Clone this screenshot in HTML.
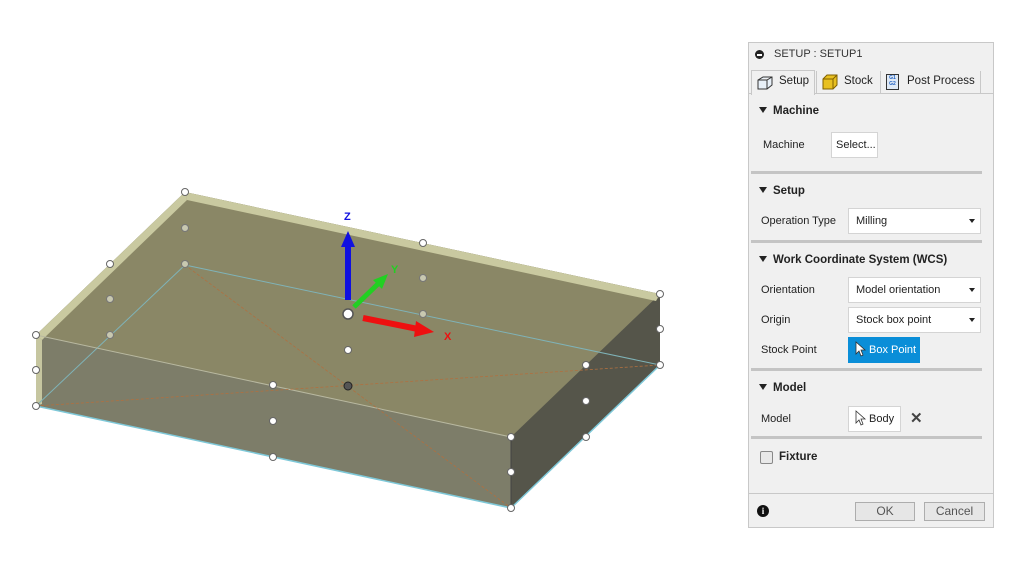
<!DOCTYPE html>
<html><head><meta charset="utf-8"><style>
body{margin:0;width:1035px;height:570px;background:#fff;font-family:"Liberation Sans",sans-serif;position:relative;overflow:hidden}
.p{position:absolute;left:748px;top:42px;width:246px;height:486px;background:#f0f0f0;border:1px solid #c8c8c8;box-sizing:border-box;font-size:11px;color:#222}
.a{position:absolute}
.sep{position:absolute;left:2px;width:231px;height:3px;background:#c4c4c4}
.h{position:absolute;left:10px;font-weight:bold;font-size:11.5px}
.h:before{content:"";display:inline-block;border-left:4px solid transparent;border-right:4px solid transparent;border-top:6px solid #222;margin-right:6px;vertical-align:1px}
.box{position:absolute;background:#fff;border:1px solid #d4d4d4;box-sizing:border-box;padding-left:7px;line-height:24px}
.dd:after{content:"";position:absolute;right:5px;top:10px;border-left:3px solid transparent;border-right:3px solid transparent;border-top:4px solid #222}
.btn{position:absolute;background:#e6e6e6;border:1px solid #adadad;box-sizing:border-box;text-align:center;line-height:17px;font-size:12px;color:#555}
</style></head><body>
<svg class="a" style="left:0;top:0" width="740" height="570">
<polygon points="185,192 660,294 660,365 511,508 36,406 36,335" fill="#7f7d66"/>
<polygon points="185,192 660,294 511,437 36,335" fill="#8a8766"/>
<polygon points="36,335 511,437 511,508 36,406" fill="#7d7d69"/>
<polygon points="511,437 660,294 660,365 511,508" fill="#55554a"/>
<polygon points="185,192 660,294 656,301 187,200" fill="#c9c9a0"/>
<polygon points="185,192 187,200 42,340 36,335" fill="#c9c9a0"/>
<polygon points="36,335 42,340 42,404 36,406" fill="#c6c6a0"/>
<line x1="185" y1="265" x2="660" y2="365" stroke="#7fb3b8" stroke-width="1"/>
<line x1="185" y1="265" x2="36" y2="406" stroke="#7fb3b8"/>
<line x1="36" y1="406" x2="511" y2="508" stroke="#7ec8d8" stroke-width="1.5"/>
<line x1="511" y1="508" x2="660" y2="365" stroke="#7ec8d8" stroke-width="1.5"/>
<line x1="36" y1="335" x2="511" y2="437" stroke="#b8b8a0"/>
<line x1="511" y1="437" x2="511" y2="508" stroke="#444"/>
<line x1="185" y1="265" x2="511" y2="508" stroke="#b07040" stroke-dasharray="3,2" stroke-width=".8"/>
<line x1="36" y1="406" x2="660" y2="365" stroke="#b07040" stroke-dasharray="3,2" stroke-width=".8"/>
<g fill="#fff" stroke="#666" stroke-width="1">
<circle cx="185" cy="192" r="3.5"/><circle cx="423" cy="243" r="3.5"/><circle cx="660" cy="294" r="3.5"/>
<circle cx="110" cy="264" r="3.5"/><circle cx="36" cy="335" r="3.5"/><circle cx="36" cy="370" r="3.5"/><circle cx="36" cy="406" r="3.5"/>
<circle cx="660" cy="329" r="3.5"/><circle cx="660" cy="365" r="3.5"/><circle cx="586" cy="365" r="3.5"/><circle cx="586" cy="401" r="3.5"/><circle cx="586" cy="437" r="3.5"/>
<circle cx="511" cy="437" r="3.5"/><circle cx="511" cy="472" r="3.5"/><circle cx="511" cy="508" r="3.5"/>
<circle cx="273" cy="385" r="3.5"/><circle cx="273" cy="421" r="3.5"/><circle cx="348" cy="350" r="3.5"/><circle cx="273" cy="457" r="3.5"/>
</g>
<g fill="#c8c8b0" stroke="#777"><circle cx="185" cy="228" r="3.5"/><circle cx="185" cy="264" r="3.5"/><circle cx="110" cy="299" r="3.5"/><circle cx="110" cy="335" r="3.5"/><circle cx="423" cy="278" r="3.5"/><circle cx="423" cy="314" r="3.5"/></g>
<circle cx="348" cy="386" r="4" fill="#555" stroke="#222"/>
<rect x="345" y="245" width="6" height="55" fill="#1010e0"/><polygon points="341,247 355,247 348,231" fill="#1010e0"/>
<line x1="354" y1="307" x2="380" y2="282" stroke="#22d022" stroke-width="5"/><polygon points="373,280 388,274 382,289" fill="#22d022"/>
<line x1="363" y1="318" x2="418" y2="329" stroke="#ee1010" stroke-width="6"/><polygon points="416,321 434,332 414,337" fill="#ee1010"/>
<circle cx="348" cy="314" r="5" fill="#fff" stroke="#555" stroke-width="1.5"/>
<text x="344" y="220" fill="#1010e0" font-size="11" font-weight="bold" font-family="Liberation Sans">Z</text>
<text x="391" y="273" fill="#22d022" font-size="11" font-weight="bold" font-family="Liberation Sans">Y</text>
<text x="444" y="340" fill="#ee1010" font-size="11" font-weight="bold" font-family="Liberation Sans">X</text>
</svg>
<div class="p">
<div class="a" style="left:6px;top:7px;width:9px;height:9px;border-radius:50%;background:#222"></div>
<div class="a" style="left:8px;top:11px;width:5px;height:1.5px;background:#fff"></div>
<div class="a" style="left:25px;top:5px;color:#333">SETUP : SETUP1</div>
<div class="a" style="left:0;top:50px;width:244px;height:1px;background:#c8c8c8"></div>
<div class="a" style="left:2px;top:27px;width:64px;height:25px;background:#f0f0f0;border:1px solid #c8c8c8;border-bottom:none;box-sizing:border-box"></div>
<svg class="a" style="left:8px;top:31px" width="16" height="16"><path d="M1 6 L6 3 L15 3 L15 11 L10 15 L1 15 Z M1 6 L10 6 L15 3 M10 6 L10 15" fill="#e8f0f8" stroke="#333"/></svg>
<div class="a" style="left:30px;top:32px;font-size:11.5px">Setup</div>
<div class="a" style="left:67px;top:28px;width:1px;height:22px;background:#c8c8c8"></div>
<svg class="a" style="left:73px;top:31px" width="16" height="16"><path d="M1 5 L5 1 L15 1 L15 11 L11 15 L1 15 Z" fill="#e8c020" stroke="#806000"/><path d="M1 5 L11 5 L15 1 M11 5 L11 15" stroke="#806000" fill="none"/></svg>
<div class="a" style="left:95px;top:32px;font-size:11.5px">Stock</div>
<div class="a" style="left:131px;top:28px;width:1px;height:22px;background:#c8c8c8"></div>
<div class="a" style="left:137px;top:31px;width:13px;height:16px;background:#dfe9f5;border:1px solid #333;box-sizing:border-box;font-size:5px;color:#2060c0;line-height:6px;text-align:center;font-weight:bold">G1<br>G2</div>
<div class="a" style="left:158px;top:32px;font-size:11.5px">Post Process</div>
<div class="a" style="left:231px;top:28px;width:1px;height:22px;background:#c8c8c8"></div>
<div class="h" style="top:62px">Machine</div>
<div class="a" style="left:14px;top:96px">Machine</div>
<div class="box" style="left:82px;top:89px;width:47px;height:26px;padding-left:4px">Select...</div>
<div class="sep" style="top:128px"></div>
<div class="h" style="top:142px">Setup</div>
<div class="a" style="left:12px;top:172px">Operation Type</div>
<div class="box dd" style="left:99px;top:165px;width:133px;height:26px">Milling</div>
<div class="sep" style="top:197px"></div>
<div class="h" style="top:211px">Work Coordinate System (WCS)</div>
<div class="a" style="left:12px;top:241px">Orientation</div>
<div class="box dd" style="left:99px;top:234px;width:133px;height:26px">Model orientation</div>
<div class="a" style="left:12px;top:271px">Origin</div>
<div class="box dd" style="left:99px;top:264px;width:133px;height:26px">Stock box point</div>
<div class="a" style="left:12px;top:301px">Stock Point</div>
<div class="a" style="left:99px;top:294px;width:72px;height:26px;background:#0a8ed8;color:#fff;line-height:26px;padding-left:21px;box-sizing:border-box">Box Point</div>
<svg class="a" style="left:106px;top:298px" width="12" height="16"><path d="M1 1 L1 13 L4 10 L6 15 L8 14 L6 9 L10 9 Z" fill="#fff" stroke="#333" stroke-width=".8"/></svg>
<div class="sep" style="top:325px"></div>
<div class="h" style="top:339px">Model</div>
<div class="a" style="left:12px;top:370px">Model</div>
<div class="box" style="left:99px;top:363px;width:53px;height:26px;padding-left:20px">Body</div>
<svg class="a" style="left:106px;top:367px" width="12" height="16"><path d="M1 1 L1 13 L4 10 L6 15 L8 14 L6 9 L10 9 Z" fill="#fff" stroke="#333" stroke-width=".8"/></svg>
<div class="a" style="left:161px;top:366px;font-size:15px;font-weight:bold;color:#444">✕</div>
<div class="sep" style="top:393px"></div>
<div class="a" style="left:11px;top:408px;width:11px;height:11px;border:1px solid #888;border-radius:2px;background:#e8e8e8"></div>
<div class="a" style="left:30px;top:408px;font-weight:bold;font-size:11.5px">Fixture</div>
<div class="a" style="left:0;top:450px;width:244px;height:1px;background:#c8c8c8"></div>
<div class="a" style="left:8px;top:462px;width:12px;height:12px;border-radius:50%;background:#111;color:#fff;font-size:9px;font-weight:bold;text-align:center;line-height:12px;font-family:'Liberation Serif',serif">i</div>
<div class="btn" style="left:106px;top:459px;width:60px;height:19px">OK</div>
<div class="btn" style="left:175px;top:459px;width:61px;height:19px">Cancel</div>
</div>
</body></html>
